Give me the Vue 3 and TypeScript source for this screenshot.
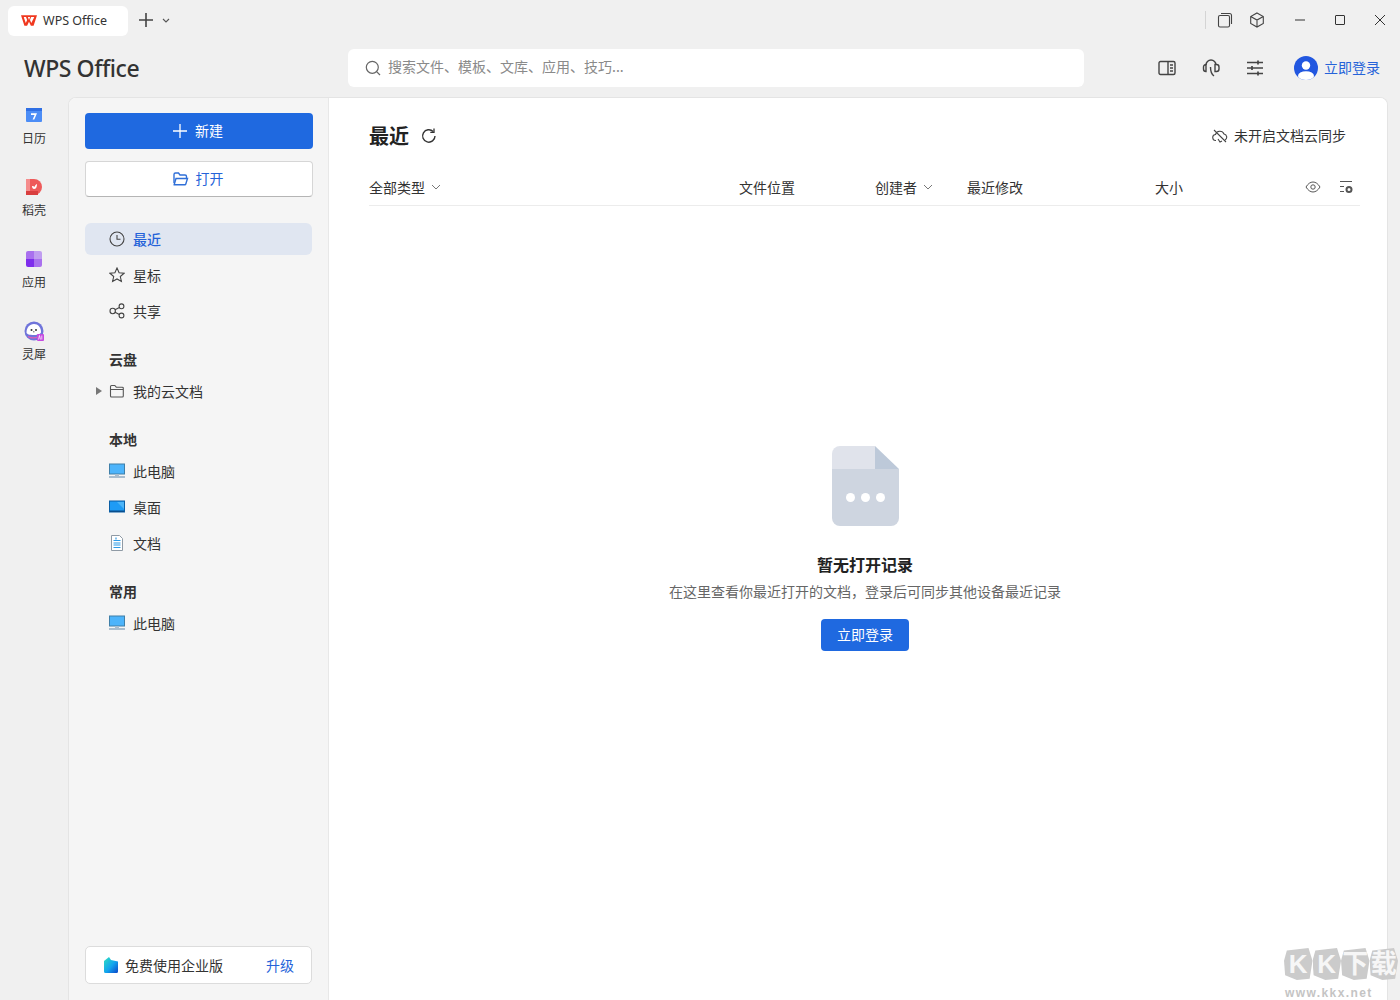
<script setup lang="ts">
const columns = ['文件位置', '创建者', '最近修改', '大小']
const watermark = ['K', 'K', '下', '载']
</script>

<template>
  <div class="app">
    <div class="titlebar">
      <div class="tab">
        <svg class="wps" viewBox="0 0 16 11" width="16" height="11">
          <path fill-rule="evenodd" d="M0 .3h16l-3.400 10.400H9.900L8 6.700l-1.900 4H3.400zM2.700 2.100l2.100 5.900 1.300-2.900-1.100-3zM13.300 2.100h-3.200l-1.100 3 1.300 2.900zM6.900 2.100L8 5l1.100-2.900z" fill="#f0381f" />
        </svg>
        <span>WPS Office</span>
      </div>
      <svg class="plus" viewBox="0 0 16 16" width="16" height="16"><path d="M8 1v14M1 8h14" stroke="#444" stroke-width="1.600" fill="none" /></svg>
      <svg class="tab-caret" viewBox="0 0 8 5" width="8" height="5"><path d="M1 1l3 3 3-3" stroke="#555" stroke-width="1.100" fill="none" /></svg>
      <div class="spacer"></div>
      <div class="sep"></div>
      <div class="tb-icon first">
        <svg viewBox="0 0 16 16" width="16" height="16" fill="none" stroke="#444" stroke-width="1.100"><rect x="1.500" y="3.500" width="11" height="11.500" rx="1.500" /><path d="M4 1.500h8.500a2 2 0 0 1 2 2V12" /></svg>
      </div>
      <div class="tb-icon">
        <svg viewBox="0 0 16 16" width="16" height="16" fill="none" stroke="#444" stroke-width="1.100"><path d="M8 1l6.300 3.500v7L8 15l-6.300-3.500v-7zM1.700 4.500L8 8l6.300-3.500M8 8v7" /></svg>
      </div>
      <div class="win-gap"></div>
      <div class="win">
        <svg viewBox="0 0 12 12" width="12" height="12"><path d="M1 6h10" stroke="#333" stroke-width="1" /></svg>
      </div>
      <div class="win">
        <svg viewBox="0 0 12 12" width="12" height="12"><rect x="1.500" y="1.500" width="9" height="9" rx=".5" fill="none" stroke="#333" stroke-width="1" /></svg>
      </div>
      <div class="win">
        <svg viewBox="0 0 12 12" width="12" height="12"><path d="M1 1l10 10M11 1L1 11" stroke="#333" stroke-width="1" /></svg>
      </div>
    </div>

    <div class="header">
      <div class="brand">WPS Office</div>
      <div class="search">
        <svg viewBox="0 0 16 16" width="16" height="16" fill="none" stroke="#666" stroke-width="1.200"><circle cx="7.300" cy="7.300" r="6" /><path d="M11.600 11.600l3.400 3.400" /></svg>
        <span>搜索文件、模板、文库、应用、技巧...</span>
      </div>
      <div class="head-tools">
        <svg viewBox="0 0 18 16" width="18" height="16" fill="none" stroke="#444" stroke-width="1.400"><rect x="1" y="1.500" width="16" height="13" rx="1.500" /><path d="M10 1.500v13M12 5h3M12 8h3M12 11h3" /></svg>
        <svg viewBox="0 0 18 20" width="18" height="20" fill="none" stroke="#444" stroke-width="1.400"><path d="M4 7a5 5 0 0 1 10 0v0" /><path d="M4 6.500a2.500 2.500 0 0 0-2.500 2.500v2A2.500 2.500 0 0 0 4 13.500z" /><path d="M13 6.500h1.500a2.500 2.500 0 0 1 2.500 2.500v2a2.500 2.500 0 0 1-2.500 2.500H13z" /><path d="M8.500 9c0 4 .5 7 3.500 9" /></svg>
        <svg viewBox="0 0 18 16" width="18" height="16" fill="none" stroke="#444" stroke-width="1.400"><path d="M1 2.500h16M1 8h16M1 13.500h16" /><path d="M12 .5v4M6 6v4M12 11.500v4" stroke-width="1.700" /></svg>
      </div>
      <div class="login">
        <svg viewBox="0 0 24 24" width="24" height="24"><defs><clipPath id="avatar-clip"><circle cx="12" cy="12" r="12" /></clipPath></defs><circle cx="12" cy="12" r="12" fill="#2257e0" /><circle cx="12" cy="9.500" r="4.200" fill="#fff" /><ellipse cx="12" cy="20" rx="8" ry="4.800" fill="#fff" clip-path="url(#avatar-clip)" /></svg>
        <span>立即登录</span>
      </div>
    </div>

    <div class="body">
      <nav class="rail">
        <div class="rail-item">
          <svg viewBox="0 0 16 16" width="16" height="16"><rect x="0" y="1" width="16" height="14" rx="1" fill="#4c8df6" /><rect x="0" y="1" width="16" height="3" fill="#2f6fe4" /><path d="M5 6.300h6L8.300 12.500H6.600l2-4.600H5z" fill="#fff" /></svg>
          <span>日历</span>
        </div>
        <div class="rail-item">
          <svg viewBox="0 0 16 16" width="16" height="16"><path d="M0 0h8a8 8 0 0 1 0 16H0z" fill="#ee5a5a" /><rect x="0" y="0" width="4" height="16" fill="#f58c8c" /><rect x="0" y="12" width="12" height="4" fill="#d93e3e" /><path d="M6 7c0 2 1 3 2 3 2 0 3-2 3-5-1.500.5-2 1.500-2.500 3C8 7 7 7 6 7z" fill="#fff" /></svg>
          <span>稻壳</span>
        </div>
        <div class="rail-item">
          <svg viewBox="0 0 16 16" width="16" height="16"><path d="M2 0h6v8H0V2a2 2 0 0 1 2-2z" fill="#a970ee" /><path d="M8 0h6a2 2 0 0 1 2 2v6H8z" fill="#c09df0" /><path d="M0 8h8v8H2a2 2 0 0 1-2-2z" fill="#7e2dec" /><path d="M8 8h8v6a2 2 0 0 1-2 2H8z" fill="#a970ee" /></svg>
          <span>应用</span>
        </div>
        <div class="rail-item">
          <svg viewBox="0 0 20 20" width="20" height="20"><circle cx="10" cy="10" r="9.500" fill="#6f74da" /><path d="M2.500 11.500C2.500 7 5.500 3 10 3c4 0 7 3.500 7 8 0 2-3 3-7 3-4.500 0-7.500-.8-7.500-2.500z" fill="#fff" /><path d="M4 15.500c3 1.700 7 1.700 10 .7" stroke="#e05bb5" stroke-width="1.300" fill="none" /><circle cx="7.500" cy="9" r="1" fill="#333" /><circle cx="12" cy="9" r="1" fill="#333" /><path d="M9 10.800h1.500" stroke="#333" stroke-width=".8" /><rect x="13" y="13" width="7" height="7" rx="1" fill="#c44be0" /><path d="M14.500 18.500l1-4 1 4M17.800 14.500v4" stroke="#fff" stroke-width=".7" fill="none" /></svg>
          <span>灵犀</span>
        </div>
      </nav>

      <div class="panel">
        <aside class="side">
          <button class="btn-new">
            <svg viewBox="0 0 14 14" width="14" height="14"><path d="M7 0v14M0 7h14" stroke="#fff" stroke-width="1.300" /></svg>
            <span>新建</span>
          </button>
          <button class="btn-open">
            <svg viewBox="0 0 16 14" width="16" height="14" fill="none" stroke="#2f6fd8" stroke-width="1.400"><path d="M1 11V2.500A1.500 1.500 0 0 1 2.500 1h3l1.500 2h5A1.500 1.500 0 0 1 13.500 4.500V6" /><path d="M1.200 12.500L3 6.500h11.500l-1.700 5.500a1 1 0 0 1-1 .7H1.200z" /></svg>
            <span>打开</span>
          </button>

          <div class="nav-item active">
            <svg viewBox="0 0 16 16" width="16" height="16" fill="none" stroke="#444" stroke-width="1.100"><circle cx="8" cy="8" r="7" /><path d="M8 4v4.300h3.500" /></svg>
            <span>最近</span>
          </div>
          <div class="nav-item">
            <svg viewBox="0 0 16 16" width="16" height="16" fill="none" stroke="#444" stroke-width="1.100"><path d="M8 1l2.100 4.700 5 .5-3.800 3.300 1.100 5L8 12l-4.400 2.500 1.100-5L.900 6.200l5-.5z" /></svg>
            <span>星标</span>
          </div>
          <div class="nav-item">
            <svg viewBox="0 0 16 16" width="16" height="16" fill="none" stroke="#444" stroke-width="1.100"><circle cx="3.700" cy="8" r="2.700" /><circle cx="12.500" cy="3.300" r="2.400" /><circle cx="12.500" cy="12.500" r="2.400" /><path d="M6 6.700l4.400-2.300M6 9.300l4.400 2.300" /></svg>
            <span>共享</span>
          </div>

          <div class="group-title">云盘</div>
          <div class="nav-item tree">
            <svg class="tree-caret" viewBox="0 0 6 8" width="6" height="8"><path d="M0 0l6 4-6 4z" fill="#777" /></svg>
            <svg viewBox="0 0 16 14" width="16" height="14" fill="none" stroke="#555" stroke-width="1.100"><path d="M1.500 12V2.500a1 1 0 0 1 1-1h3.300l1.500 1.700h6a1 1 0 0 1 1 1V12a1 1 0 0 1-1 1h-10.800a1 1 0 0 1-1-1zM1.500 5.500h13" /></svg>
            <span>我的云文档</span>
          </div>

          <div class="group-title">本地</div>
          <div class="nav-item">
            <svg viewBox="0 0 16 16" width="16" height="16"><rect x="0.500" y="1" width="15" height="10" fill="#4db4fb" stroke="#3f7fa8" /><rect x="6" y="11" width="4" height="2" fill="#a9bdce" /><rect x="0" y="13" width="16" height="2" fill="#a9bdce" /></svg>
            <span>此电脑</span>
          </div>
          <div class="nav-item">
            <svg viewBox="0 0 16 14" width="16" height="14"><rect x="0.500" y="1" width="15" height="11" fill="#1e9bf5" stroke="#0b5fa5" /><path d="M8 2h7v7z" fill="#60c0fb" opacity=".7" /><rect x="1" y="10.500" width="14" height="1.500" fill="#0a4e8c" /></svg>
            <span>桌面</span>
          </div>
          <div class="nav-item">
            <svg viewBox="0 0 16 16" width="16" height="16" fill="none"><path d="M2.500 .5h8L13.500 3.500v12h-11z" fill="#fff" stroke="#8f9aa5" /><path d="M7 2.500v2M4.500 5.500h7M4.500 8h7M4.500 10h7M4.500 12.500h7" stroke="#2f9be6" stroke-width="1.200" /></svg>
            <span>文档</span>
          </div>

          <div class="group-title">常用</div>
          <div class="nav-item">
            <svg viewBox="0 0 16 16" width="16" height="16"><rect x="0.500" y="1" width="15" height="10" fill="#4db4fb" stroke="#3f7fa8" /><rect x="6" y="11" width="4" height="2" fill="#a9bdce" /><rect x="0" y="13" width="16" height="2" fill="#a9bdce" /></svg>
            <span>此电脑</span>
          </div>

          <div class="side-fill"></div>
          <div class="upgrade">
            <svg viewBox="0 0 16 16" width="16" height="16"><defs><linearGradient id="ent" x1="0" y1="0" x2="1" y2="1"><stop offset="0" stop-color="#2fe0c0" /><stop offset=".55" stop-color="#12a4ee" /><stop offset="1" stop-color="#0b45c8" /></linearGradient></defs><path d="M1 4l5-4 2 3 7 1.500v10a1.500 1.500 0 0 1-1.500 1.500h-11A1.500 1.500 0 0 1 1 14.500z" fill="url(#ent)" /></svg>
            <span class="upgrade-text">免费使用企业版</span>
            <span class="upgrade-link">升级</span>
          </div>
        </aside>

        <main class="content">
          <div class="content-head">
            <h1>最近</h1>
            <svg viewBox="0 0 16 16" width="16" height="16" fill="none" stroke="#333" stroke-width="1.400"><path d="M14 8a6.200 6.200 0 1 1-1.800-4.400" /><path d="M13 .5v3.800H9.300" stroke-width="1.300" /></svg>
            <div class="spacer"></div>
            <svg viewBox="0 0 16 16" width="16" height="16" fill="none" stroke="#444" stroke-width="1.100"><path d="M4 12.500a3 3 0 0 1-.5-6A4.500 4.500 0 0 1 12 6a3.200 3.200 0 0 1 1 6" /><path d="M2 2l12 12" /><path d="M6 11l2 3 2-1" /></svg>
            <span class="sync">未开启文档云同步</span>
          </div>

          <div class="table-head">
            <div class="col type">全部类型
              <svg viewBox="0 0 10 6" width="10" height="6"><path d="M1 1l4 4 4-4" stroke="#777" stroke-width="1" fill="none" /></svg>
            </div>
            <div class="col loc">{{ columns[0] }}</div>
            <div class="col owner">{{ columns[1] }}
              <svg viewBox="0 0 10 6" width="10" height="6"><path d="M1 1l4 4 4-4" stroke="#777" stroke-width="1" fill="none" /></svg>
            </div>
            <div class="col mod">{{ columns[2] }}</div>
            <div class="col size">{{ columns[3] }}</div>
            <svg class="eye" viewBox="0 0 16 12" width="16" height="12" fill="none" stroke="#555" stroke-width="1"><path d="M1 6c2-3.300 4.400-5 7-5s5 1.700 7 5c-2 3.300-4.400 5-7 5s-5-1.700-7-5z" /><circle cx="8" cy="6" r="2.200" /></svg>
            <svg class="cols" viewBox="0 0 14 14" width="14" height="14" fill="none" stroke="#555" stroke-width="1"><path d="M1 1.500h12M1 6.500h4M1 11.500h4" /><circle cx="10" cy="9.500" r="2.500" stroke-width="2" /></svg>
          </div>

          <div class="empty">
            <svg viewBox="0 0 67 80" width="67" height="80">
              <path d="M8 0h35v23H0V8a8 8 0 0 1 8-8z" fill="#e0e3eb" />
              <path d="M43 0l24 23H43z" fill="#bdc9d9" />
              <path d="M0 23h67v49a8 8 0 0 1-8 8H8a8 8 0 0 1-8-8z" fill="#ced5e0" />
              <circle cx="18.500" cy="51.500" r="4.500" fill="#fff" />
              <circle cx="33.500" cy="51.500" r="4.500" fill="#fff" />
              <circle cx="48.500" cy="51.500" r="4.500" fill="#fff" />
            </svg>
            <div class="empty-title">暂无打开记录</div>
            <div class="empty-desc">在这里查看你最近打开的文档，登录后可同步其他设备最近记录</div>
            <button class="empty-btn">立即登录</button>
          </div>
        </main>
      </div>
    </div>

    <div class="watermark">
      <div class="wm-row">
        <span v-for="(ch, i) in watermark" :key="i" class="wm-ch">{{ ch }}</span>
      </div>
      <div class="wm-url">www.kkx.net</div>
    </div>
  </div>
</template>

<style scoped>
.app {
  position: relative;
  width: 1400px;
  height: 1000px;
  overflow: hidden;
  background: #f0f0f0;
  display: flex;
  flex-direction: column;
  font-family: "Noto Sans CJK SC", "Noto Sans", sans-serif;
  font-size: 14px;
  color: #333;
}
svg { flex: none; display: block; }
.spacer { flex: 1; }

.titlebar {
  height: 40px;
  display: flex;
  align-items: center;
  flex: none;
}
.tab {
  margin: 6px 0 0 8px;
  width: 120px;
  height: 30px;
  box-sizing: border-box;
  padding: 0 0 2px 13px;
  background: #fff;
  border-radius: 6px;
  display: flex;
  align-items: center;
  gap: 6px;
  font-family: "Noto Sans", sans-serif;
  font-size: 12.500px;
  color: #333;
  align-self: flex-start;
}
.plus { margin-left: 10px; }
.tab-caret { margin-left: 8px; }
.sep { width: 1px; height: 18px; background: #d4d4d4; margin-right: 11px; }
.tb-icon { width: 16px; display: flex; justify-content: center; }
.tb-icon.first { margin-right: 16px; }
.win-gap { width: 15px; }
.win { width: 40px; display: flex; justify-content: center; }

.header {
  height: 57px;
  flex: none;
  display: flex;
  align-items: center;
  box-sizing: border-box;
  padding-bottom: 1px;
}
.brand {
  width: 348px;
  padding: 0 0 1px 24px;
  box-sizing: border-box;
  font-family: "Noto Sans", sans-serif;
  font-size: 23px;
  font-weight: 500;
  color: #333;
  letter-spacing: -0.420px;
}
.search {
  width: 736px;
  height: 38px;
  background: #fff;
  border-radius: 6px;
  display: flex;
  align-items: center;
  box-sizing: border-box;
  padding-left: 17px;
  gap: 7px;
  font-size: 14px;
  color: #8a8a8a;
}
.search span { margin-top: -5px; }
.head-tools {
  display: flex;
  align-items: center;
  margin-left: 74px;
  gap: 26px;
  width: 122px;
  box-sizing: border-box;
}
.login {
  display: flex;
  align-items: center;
  gap: 6px;
  margin-left: 14px;
  color: #2563d9;
}
.login span { margin-top: -2px; }

.body { flex: 1; display: flex; min-height: 0; }
.rail {
  width: 68px;
  flex: none;
  display: flex;
  flex-direction: column;
  padding-top: 8px;
  box-sizing: border-box;
}
.rail-item {
  width: 68px;
  height: 72px;
  display: flex;
  flex-direction: column;
  align-items: center;
  font-size: 12px;
  color: #333;
  flex: none;
}
.rail-item svg { height: 20px; }
.rail-item span { margin-top: 4px; line-height: 18px; }

.panel {
  width: 1320px;
  display: flex;
  background: #fff;
  border-radius: 8px 8px 0 0;
  border: 1px solid #e4e4e4;
  border-bottom: none;
  box-sizing: border-box;
  overflow: hidden;
}
.side {
  width: 260px;
  flex: none;
  background: #f5f5f5;
  border-right: 1px solid #e8e8e8;
  box-sizing: border-box;
  padding: 15px 15px 15px 16px;
  display: flex;
  flex-direction: column;
}
button {
  font-family: inherit;
  font-size: 14px;
  border: none;
  cursor: pointer;
  padding: 0;
}
.btn-new, .btn-open {
  width: 228px;
  height: 36px;
  border-radius: 4px;
  display: flex;
  align-items: center;
  justify-content: center;
  gap: 8px;
  flex: none;
  padding-right: 2px;
}
.btn-new span, .btn-open span { margin-top: -2px; }
.btn-new { background: #1f69e0; color: #fff; }
.btn-open {
  margin-top: 12px;
  margin-bottom: 26px;
  background: #fff;
  color: #2563d9;
  border: 1px solid #d6d6d6;
  border-bottom-color: #b5b5b5;
  box-sizing: border-box;
  gap: 7px;
}
.nav-item {
  width: 227px;
  height: 32px;
  margin-bottom: 4px;
  flex: none;
  box-sizing: border-box;
  padding-left: 24px;
  display: flex;
  align-items: center;
  gap: 8px;
  border-radius: 6px;
  color: #333;
}
.nav-item.active { background: #e0e6f1; color: #2563d9; font-weight: 500; }
.nav-item.tree { position: relative; }
.tree-caret { position: absolute; left: 11px; top: 12px; }
.group-title {
  height: 32px;
  margin-top: 12px;
  padding-left: 24px;
  display: flex;
  align-items: center;
  font-weight: 700;
  color: #333;
  flex: none;
}
.side-fill { flex: 1; }
.upgrade {
  width: 227px;
  height: 38px;
  flex: none;
  margin-bottom: 1px;
  background: #fff;
  border: 1px solid #dcdcdc;
  border-radius: 5px;
  box-sizing: border-box;
  display: flex;
  align-items: center;
  padding: 0 17px;
  gap: 6px;
}
.upgrade-text { flex: 1; color: #333; }
.upgrade-link { color: #2563d9; }

.content {
  flex: 1;
  min-width: 0;
  background: #fff;
  box-sizing: border-box;
  padding: 0 27px 0 40px;
  display: flex;
  flex-direction: column;
}
.content-head {
  height: 78px;
  flex: none;
  display: flex;
  align-items: center;
  box-sizing: border-box;
  gap: 6px;
  padding: 0 14px 2px 0;
}
.content-head h1 {
  margin: 0 6px 0 0;
  font-size: 20px;
  font-weight: 700;
  color: #222;
  line-height: 1;
}
.sync { font-size: 14px; color: #333; margin-top: -2px; }
.table-head {
  height: 22px;
  flex: none;
  border-bottom: 1px solid #ececec;
  display: flex;
  align-items: center;
  padding-bottom: 7px;
  box-sizing: content-box;
}
.col { display: flex; align-items: center; gap: 6px; color: #333; flex: none; }
.type { width: 370px; }
.loc { width: 136px; }
.owner { width: 92px; }
.mod { width: 188px; }
.size { width: 150px; }
.cols { margin-left: 18px; }

.empty {
  display: flex;
  flex-direction: column;
  align-items: center;
  padding-top: 240px;
  width: 992px;
}
.empty-title { margin-top: 25px; font-size: 16px; font-weight: 700; color: #222; line-height: 26px; }
.empty-desc { margin-top: 3px; color: #666; line-height: 22px; }
.empty-btn {
  margin-top: 17px;
  width: 88px;
  height: 32px;
  padding-bottom: 2px;
  background: #1f69e0;
  color: #fff;
  border-radius: 4px;
}

.watermark {
  position: absolute;
  right: 2px;
  bottom: 0;
  width: 114px;
  display: flex;
  flex-direction: column;
}
.wm-row { display: flex; }
.wm-ch {
  width: 29px;
  height: 32px;
  background: #cbcbcb;
  color: #f6f6f6;
  clip-path: polygon(10% 8%, 86% 0, 100% 40%, 90% 96%, 45% 100%, 4% 85%, 0 40%);
  font-family: "Liberation Sans", "Noto Sans CJK SC", sans-serif;
  font-size: 26px;
  font-weight: 700;
  line-height: 32px;
  text-align: center;
}
.wm-url {
  margin: 7px 0 0 1px;
  font-family: "Liberation Sans", sans-serif;
  font-size: 12px;
  font-weight: 700;
  letter-spacing: 1.400px;
  color: #c4c4c4;
  line-height: 13px;
}
</style>

<style>
html, body { background: #f0f0f0; }
</style>
